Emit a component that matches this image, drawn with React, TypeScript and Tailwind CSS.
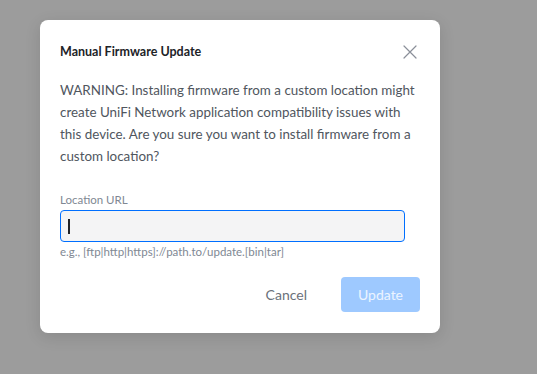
import React from "react";

export default function App() {
  return (
    <div
      className="w-[537px] h-[374px] bg-[#9c9c9c] relative overflow-hidden"
      style={{ fontFamily: "Lato, 'Noto Sans', sans-serif" }}
    >
      <div className="absolute left-[40px] top-[20px] w-[400px] bg-white rounded-[8px] px-[20px] pt-[22px] pb-[21px] shadow-[0_4px_16px_rgba(0,0,0,0.12)]">
        <div className="flex items-center justify-between h-[20px]">
          <div className="text-[12.5px] font-bold text-[#212327]">Manual Firmware Update</div>
          <svg width="14" height="14" viewBox="0 0 14 14" className="mr-[3px]">
            <path d="M1 1L13 13M13 1L1 13" stroke="#8a8f99" strokeWidth="1.2" strokeLinecap="round" />
          </svg>
        </div>
        <p className="mt-[17px] text-[13.4px] leading-[22px] text-[#50565e]">
          WARNING: Installing firmware from a custom location might create UniFi Network application compatibility issues with this device. Are you sure you want to install firmware from a custom location?
        </p>
        <div className="mt-[25px] text-[11.5px] leading-[16px] text-[#808893]">Location URL</div>
        <div className="mt-[2px] w-[345px] h-[32px] rounded-[4px] border border-[#006fff] bg-[#f4f4f5] flex items-center pl-[7px]">
          <div className="w-[2px] h-[15px] bg-[#212327]" />
        </div>
        <div className="mt-[2px] text-[11.5px] leading-[16px] text-[#808893]">
          e.g., [ftp|http|https]://path.to/update.[bin|tar]
        </div>
        <div className="mt-[17px] flex items-center justify-end">
          <div className="text-[14px] text-[#6b717a] mr-[34px]">Cancel</div>
          <div className="w-[79px] h-[35px] rounded-[4px] bg-[#9ec9ff] flex items-center justify-center text-[14px] text-white/80">
            Update
          </div>
        </div>
      </div>
    </div>
  );
}
